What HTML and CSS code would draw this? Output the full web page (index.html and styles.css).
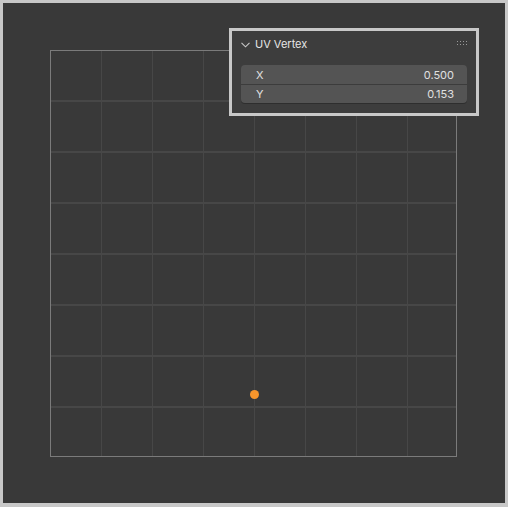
FILE: index.html
```html
<!DOCTYPE html>
<html>
<head>
<meta charset="utf-8">
<link rel="stylesheet" href="styles.css">
</head>
<body>
<div class="editor">
  <div class="uv-frame">
    <div class="vertex"></div>
  </div>
  <div class="panel">
    <div class="panel-header">
      <svg class="chevron" width="9" height="6" viewBox="0 0 9 6"><path d="M0.5 0.8 L4.5 4.8 L8.5 0.8" fill="none" stroke="#c8c8c8" stroke-width="1.1"/></svg>
      <span class="title">UV Vertex</span>
      <svg class="grip" width="11" height="5" viewBox="0 0 11 5">
        <g fill="#9a9a9a">
          <rect x="0" y="0" width="1" height="1"/><rect x="3" y="0" width="1" height="1"/><rect x="6" y="0" width="1" height="1"/><rect x="9" y="0" width="1" height="1"/>
          <rect x="0" y="3" width="1" height="1"/><rect x="3" y="3" width="1" height="1"/><rect x="6" y="3" width="1" height="1"/><rect x="9" y="3" width="1" height="1"/>
        </g>
      </svg>
    </div>
    <div class="fields">
      <div class="field"><span>X</span><span>0.500</span></div>
      <div class="field"><span>Y</span><span>0.153</span></div>
    </div>
  </div>
</div>
</body>
</html>
```
FILE: styles.css
```css
html, body { margin: 0; padding: 0; }
body {
  background: #c8c8c8;
  width: 508px;
  height: 507px;
  overflow: hidden;
  font-family: Inter, "DejaVu Sans", sans-serif;
}
.editor {
  position: relative;
  margin: 3px 3px 0 3px;
  width: 502px;
  height: 500px;
  background: #393939;
  padding: 47px 0 0 47px;
  box-sizing: border-box;
}
.uv-frame {
  position: relative;
  width: 407px;
  height: 407px;
  box-sizing: border-box;
  border: 1px solid #7b7b7b;
  background-color: #393939;
  background-image:
    linear-gradient(to right, transparent 50px, #474747 50px, #474747 51px),
    linear-gradient(to bottom, transparent 49px, #474747 49px, #474747 50px);
  background-size: 51px 51px;
  background-origin: padding-box;
}
.vertex {
  position: absolute;
  left: 199px;
  top: 339px;
  width: 9px;
  height: 9px;
  border-radius: 50%;
  background: #f7962c;
}
.panel {
  position: absolute;
  left: 226px;
  top: 25px;
  width: 250px;
  height: 88px;
  box-sizing: border-box;
  border: 3px solid #c8c8c8;
  background: #3d3d3d;
  display: flex;
  flex-direction: column;
}
.panel-header {
  height: 26px;
  display: flex;
  align-items: center;
  padding: 0 8px 0 9px;
  color: #e6e6e6;
  font-size: 11px;
}
.chevron { margin-right: 5px; margin-top: 1px; }
.title { flex: 1; }
.grip { margin-top: -1px; }
.fields {
  margin: 8px 9px 0 9px;
  border-radius: 4px;
  overflow: hidden;
  background: #545454;
  box-shadow: 0 1px 0 #2e2e2e;
}
.field {
  height: 19px;
  display: flex;
  justify-content: space-between;
  align-items: center;
  padding: 0 13px 0 15px;
  color: #e0e0e0;
  font-size: 11px;
}
.field + .field { border-top: 1px solid #3c3c3c; height: 18px; }
```
